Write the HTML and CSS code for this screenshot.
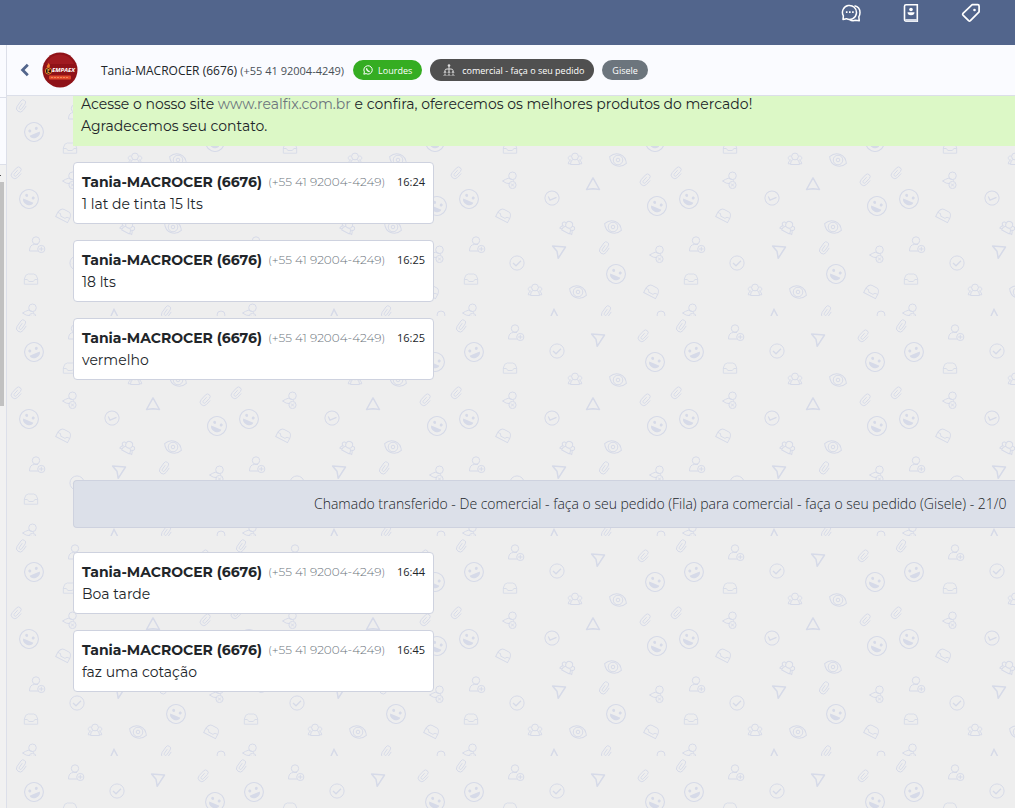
FILE: index.html
```html
<!DOCTYPE html>
<html lang="pt-BR">
<head>
  <meta charset="UTF-8" />
  <meta name="viewport" content="width=device-width, initial-scale=1.0" />
  <link rel="stylesheet" href="styles.css">
  <title>Atendimento</title>
</head>
<body>
  <header class="topbar">
    <button class="icon-btn" type="button" aria-label="Conversas">
      <svg width="20" height="20" viewBox="0 0 20 20" fill="none" stroke="#fff" stroke-width="1.5" stroke-linejoin="round">
        <path d="M2 16.400l.4-3.500a7 7 0 1 1 3 2.800z" />
        <path d="M13.500 2.800c3.400.8 5.500 3.500 5.500 6.800 0 1.700-.4 3-1.200 4.300l.5 3.900-3.800-.5c-2 .7-4.300.5-6-.9" />
        <path d="M4.900 9.200h1.600M8 9.200h1.600M11.100 9.200h1.600" stroke-width="1.800" />
      </svg>
    </button>
    <button class="icon-btn" type="button" aria-label="Contatos">
      <svg width="20" height="20" viewBox="0 0 20 20">
        <path d="M5 1.800h11.300v16.400H5.500a2 2 0 0 1-2-2V3.300A1.500 1.500 0 0 1 5 1.800z" fill="none" stroke="#fff" stroke-width="1.600" />
        <path d="M4 16h12.300v2.500H5z" fill="#d5dbe8" />
        <circle cx="10" cy="6.500" r="1.800" fill="#fff" />
        <path d="M6.500 9.300h7a3.500 3 0 0 1-7 0z" fill="#fff" />
      </svg>
    </button>
    <button class="icon-btn" type="button" aria-label="Etiquetas">
      <svg width="20" height="20" viewBox="0 0 20 20">
        <path d="M11.200 1.700h5.600q1.300 0 1.300 1.300v5.800L9.400 17.700q-.9.800-1.800 0L2 12.100q-.8-.9 0-1.800z" fill="none" stroke="#fff" stroke-width="1.700" stroke-linejoin="round" />
        <circle cx="13.500" cy="7" r="1.300" fill="#fff" />
      </svg>
    </button>
  </header>

  <div class="layout">
    <aside class="sidebar">
      <div class="sidebar-head"></div>
      <div class="sidebar-filter"></div>
      <div class="sidebar-track"><div class="sidebar-thumb"></div></div>
    </aside>

    <main class="chat">
      <div class="chat-header">
        <button class="back" type="button" aria-label="Voltar">
          <svg width="10" height="14" viewBox="0 0 10 14"><path d="M7.800 1.800L2.600 7l5.200 5.200" fill="none" stroke="#52658c" stroke-width="2.800" /></svg>
        </button>
        <svg class="avatar" width="36" height="36" viewBox="0 0 36 36">
          <circle cx="18" cy="18" r="17.500" fill="#8f1218" />
          <path d="M4 12a15 15 0 0 1 28 0z" fill="#a01a20" />
          <circle cx="6.500" cy="19" r="3.200" fill="#2a0d08" stroke="#e8892b" stroke-width="1" />
          <path d="M6.500 11q3 3 0 5-3-1-1-3z" fill="#f07a2a" />
          <text x="5" y="21" class="avatar-letter">E</text>
          <text x="10" y="20" class="avatar-name">EMPAEX</text>
          <rect x="7" y="23.500" width="22" height="4" rx="1" fill="#e2492c" />
          <path d="M9 25.500h18" stroke="#f08a5c" stroke-width="1" stroke-dasharray="2 1" />
        </svg>
        <div class="contact"><strong>Tania-MACROCER (6676)</strong> <span>(+55 41 92004-4249)</span></div>
        <div class="badges">
          <span class="badge badge-green">
            <svg width="10" height="10" viewBox="0 0 10 10" fill="none" stroke="#fff"><path d="M.8 9.200l.6-2.200A4.200 4.200 0 1 1 3 8.600z" /><path d="M3.500 3.200q.2 2.800 3.200 3.500" stroke-width="1.300" /></svg>
            Lourdes
          </span>
          <span class="badge badge-dark">
            <svg width="12" height="12" viewBox="0 0 12 12" fill="none" stroke="#ddd"><circle cx="6" cy="1.500" r="1.300" fill="#ddd" stroke="none" /><path d="M6 2v5M2 7.500V6.500Q2 5 4 5h4q2 0 2 1.500v1" /><circle cx="2" cy="8.300" r=".8" /><circle cx="6" cy="8.300" r=".8" /><circle cx="10" cy="8.300" r=".8" /><path d="M.5 11.800q1.500-2.500 3 0M4.500 11.800q1.500-2.500 3 0M8.500 11.800q1.500-2.500 3 0" /></svg>
            comercial - faça o seu pedido
          </span>
          <span class="badge badge-gray">Gisele</span>
        </div>
      </div>

      <div class="chat-body">
        <svg class="wallpaper" width="100%" height="100%" aria-hidden="true">
          <defs>
            <path id="clip" d="M-1.400 -2.500v5a1.400 1.400 0 0 0 2.800 0V-3.500a2.600 2.600 0 0 0-5.200 0v6.500a3.600 3.600 0 0 0 7.200 0V-2.500" transform="rotate(35)" stroke-width=".9" />
            <g id="smile"><circle r="9.400" stroke-width="1.100" /><g fill="#d6dae8" stroke="none"><circle cx="-3.500" cy="-2.500" r="1.500" /><circle cx="3.500" cy="-2.500" r="1.500" /><path d="M-5.500 1.800H5.500a5.500 4.300 0 0 1-11 0z" /></g></g>
            <g id="check"><circle r="7.100" /><path d="M-4 0l3 2.800 5-5" stroke-width="1.300" /></g>
            <path id="send" d="M-6.500 -6L6.500 -5 -.8 6.300-2 -.8z" stroke-width="1.500" stroke-linejoin="round" />
            <path id="up" d="M0 -6.200L6.500 5.500 0 4.800-6.500 5.500z" stroke-width="1.500" stroke-linejoin="round" />
            <path id="tray" d="M-6.700 0q1-5 4-5h5.400q3 0 4 5v5.200h-13.400zM-6.700 .5h3l1.500 2h4.500l1.500-2h3" stroke-width=".9" />
            <g id="eye" stroke-width="1"><path d="M-9 0Q-6-6 0-6T9 0Q6 6 0 6T-9 0z" transform="rotate(22)" /><circle r="4.800" /><circle r="1.800" /></g>
            <g id="group" stroke-width="1"><circle cy="-2.500" r="3.400" /><path d="M-3.500-2.500a2 2 0 1 0-1 3.500q-2 1-2.300 3.800h2.300M3.500-2.500a2 2 0 1 1 1 3.500q2 1 2.300 3.800h-2.300M-4.500 5.500q0-4.500 2.500-5M4.500 5.500q0-4.500-2.500-5M-4.500 5.500h9" /></g>
            <g id="add"><circle cx="-1" cy="-4.500" r="3.700" /><path d="M1 6h-8.500q0-6.500 5-6.500h3.500" /><circle cx="4.300" cy="4" r="3.600" /><path d="M4.300 1.700v4.600M2 4h4.600" /></g>
            <g id="del"><circle cx="2.500" cy="-4.200" r="3.800" /><path d="M-1 -2q-3.500 1-6.500 3 4 3 7 2.500M-1 -1.500q4 1 5 2" /><circle cx="2.500" cy="5" r="3.600" /><path d="M1 3.500l3 3M4 3.500l-3 3" /></g>
            <pattern id="doodles" width="220" height="220" patternUnits="userSpaceOnUse">
              <g fill="none" stroke="#d6dae8" stroke-width="1">
                <use href="#clip" transform="translate(15 10)" />
                <use href="#add" transform="translate(69 17)" />
                <use href="#send" transform="translate(151 24)" />
                <use href="#clip" transform="translate(197 20) rotate(8)" />
                <use href="#smile" transform="translate(27 36) rotate(-22)" />
                <use href="#check" transform="translate(110 35)" />
                <use href="#smile" transform="translate(208 46) rotate(22)" />
                <use href="#tray" transform="translate(63 52)" />
                <use href="#group" transform="translate(128 63)" />
                <use href="#eye" transform="translate(171 64)" />
                <use href="#clip" transform="translate(10 77) rotate(8)" />
                <use href="#del" transform="translate(63 84)" />
                <use href="#up" transform="translate(146 88)" />
                <use href="#clip" transform="translate(199 84) rotate(8)" />
                <use href="#smile" transform="translate(22 103) rotate(22)" />
                <use href="#check" transform="translate(105 102) rotate(22)" />
                <use href="#smile" transform="translate(210 110) rotate(22)" />
                <use href="#tray" transform="translate(57 119) rotate(28)" />
                <use href="#group" transform="translate(121 131) rotate(28)" />
                <use href="#eye" transform="translate(166 131)" />
                <use href="#add" transform="translate(30 149)" />
                <use href="#send" transform="translate(112 156)" />
                <use href="#clip" transform="translate(158 152)" />
                <use href="#del" transform="translate(210 158)" />
                <use href="#check" transform="translate(70 167)" />
                <use href="#smile" transform="translate(169 178) rotate(22)" />
                <use href="#tray" transform="translate(24 183)" />
                <use href="#group" transform="translate(88 194)" />
                <use href="#eye" transform="translate(131 196)" />
                <use href="#tray" transform="translate(205 195) rotate(28)" />
                <use href="#del" transform="translate(23 216)" />
                <path d="M104 220l3-6.500 3.500 6.500" stroke-width="1.500" />
                <use href="#clip" transform="translate(160 216)" />
                <circle cx="214" cy="219" r="4" />
              </g>
            </pattern>
          </defs>
          <rect width="100%" height="100%" fill="url(#doodles)" />
        </svg>

        <div class="messages">
          <div class="sent">
            Acesse o nosso site <a href="#">www.realfix.com.br</a> e confira, oferecemos os melhores produtos do mercado!<br>
            Agradecemos seu contato.
          </div>
          <article class="msg">
            <div class="msg-head"><strong>Tania-MACROCER (6676)</strong><span class="phone">(+55 41 92004-4249)</span><time>16:24</time></div>
            <p>1 lat de tinta 15 lts</p>
          </article>
          <article class="msg">
            <div class="msg-head"><strong>Tania-MACROCER (6676)</strong><span class="phone">(+55 41 92004-4249)</span><time>16:25</time></div>
            <p>18 lts</p>
          </article>
          <article class="msg">
            <div class="msg-head"><strong>Tania-MACROCER (6676)</strong><span class="phone">(+55 41 92004-4249)</span><time>16:25</time></div>
            <p>vermelho</p>
          </article>
          <div class="notice">Chamado transferido - De comercial - faça o seu pedido (Fila) para comercial - faça o seu pedido (Gisele) - 21/0</div>
          <article class="msg">
            <div class="msg-head"><strong>Tania-MACROCER (6676)</strong><span class="phone">(+55 41 92004-4249)</span><time>16:44</time></div>
            <p>Boa tarde</p>
          </article>
          <article class="msg">
            <div class="msg-head"><strong>Tania-MACROCER (6676)</strong><span class="phone">(+55 41 92004-4249)</span><time>16:45</time></div>
            <p>faz uma cotação</p>
          </article>
        </div>
      </div>
    </main>
  </div>
</body>
</html>
```
FILE: styles.css
```css
* {
  box-sizing: border-box;
}
body {
  margin: 0;
  height: 100vh;
  display: flex;
  flex-direction: column;
  overflow: hidden;
  background: #eee;
  color: #212529;
  font-family: "Segoe UI", "Open Sans", sans-serif;
}
button {
  padding: 0;
  border: 0;
  background: none;
  cursor: pointer;
}
button svg {
  display: block;
}

.topbar {
  flex: none;
  height: 45px;
  padding: 3px 34px 0 0;
  display: flex;
  justify-content: flex-end;
  align-items: flex-start;
  gap: 40px;
  background: #52658c;
}

.layout {
  flex: 1;
  min-height: 0;
  display: flex;
}
.sidebar {
  flex: none;
  width: 7px;
  display: flex;
  flex-direction: column;
  background: #f1f1f1;
  border-right: 1px solid #dcdfe9;
}
.sidebar-head {
  height: 53px;
  background: #fafbff;
  border-bottom: 1px solid #dcdfe9;
}
.sidebar-filter {
  height: 67px;
  background: #fafbff;
  border-bottom: 1px solid #dcdfe9;
}
.sidebar-track {
  padding-top: 10px;
}
.sidebar-track::before {
  content: "";
  display: block;
  width: 1px;
  height: 1px;
  margin-bottom: 6px;
  background: #505050;
}
.sidebar-thumb {
  width: 4px;
  height: 224px;
  background: #c1c1c1;
}

.chat {
  flex: 1;
  min-width: 0;
  display: flex;
  flex-direction: column;
}
.chat-header {
  flex: none;
  height: 51px;
  padding-left: 13px;
  display: flex;
  align-items: center;
  background: #fafbff;
  border-bottom: 1px solid #dcdfe9;
}
.avatar {
  margin: 0 23px 0 12px;
}
.avatar-name {
  font: italic 700 6px "Open Sans", sans-serif;
  fill: #fff;
}
.avatar-letter {
  font: 700 5px "Open Sans", sans-serif;
  fill: #f3b04a;
}
.contact {
  font-size: 12px;
  white-space: nowrap;
}
.contact strong {
  font-weight: 500;
}
.contact span {
  color: #495057;
  font-size: 11px;
}
.badges {
  margin-left: 9px;
  display: flex;
  align-items: center;
  gap: 8px;
}
.badge {
  height: 20px;
  padding: 0 10px;
  display: flex;
  align-items: center;
  gap: 5px;
  border-radius: 11px;
  color: #fff;
  font-size: 9px;
  font-weight: 500;
  white-space: nowrap;
}
.badge-green {
  background: #35ad22;
}
.badge-dark {
  height: 22px;
  padding: 0 10px 0 13px;
  gap: 7px;
  background: #505050;
}
.badge-gray {
  background: #6c757d;
}

.chat-body {
  flex: 1;
  min-height: 0;
  position: relative;
  overflow: hidden;
}
.wallpaper {
  position: absolute;
  inset: 0;
}
/* scrolled a little, the first line starts under the header */
.messages {
  position: relative;
  margin: -3px 0 0 66px;
  display: flex;
  flex-direction: column;
  align-items: flex-start;
  gap: 16px;
  font-family: Montserrat, Inter, sans-serif;
  font-size: 14px;
  line-height: 22px;
}
.sent {
  align-self: stretch;
  padding: 0 8px 9px;
  background: #dcf8c6;
  white-space: nowrap;
}
.sent a {
  color: #6c757d;
  text-decoration: none;
}
.msg {
  width: 361px;
  padding: 8px;
  background: #fff;
  border: 1px solid #ced2df;
  border-radius: 4px;
}
.msg-head {
  display: flex;
  white-space: nowrap;
}
.msg-head strong {
  font-weight: 700;
}
.phone {
  margin-left: 6px;
  color: #6c757d;
  font-size: 12px;
  font-weight: 300;
}
.msg time {
  margin-left: auto;
  font-family: "Segoe UI", "Open Sans", sans-serif;
  font-size: 11px;
}
.msg p {
  margin: 0;
}
.notice {
  align-self: stretch;
  margin: 84px 0 8px;
  padding: 12px 0 12px 240px;
  overflow: hidden;
  background: #dce0e9;
  border: 1px solid #ced2df;
  border-right: 0;
  border-radius: 4px 0 0 4px;
  font-family: "Segoe UI", "Open Sans", sans-serif;
  font-size: 14px;
  font-weight: 350;
  white-space: nowrap;
}
```
